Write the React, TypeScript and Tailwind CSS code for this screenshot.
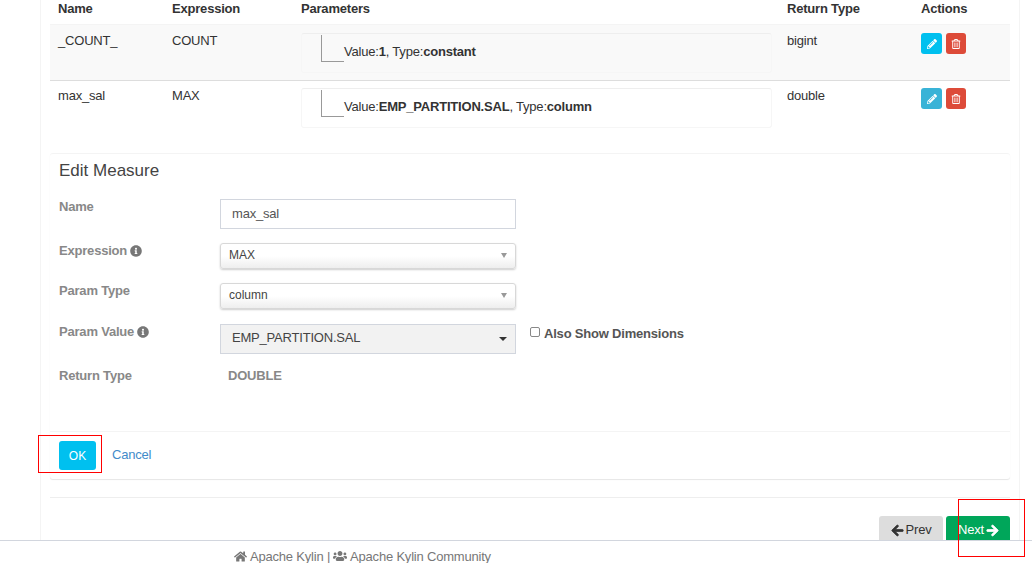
import { FaArrowLeft, FaArrowRight, FaHome, FaInfoCircle, FaPencilAlt, FaRegTrashAlt, FaUsers } from "react-icons/fa"

const measures = [
    { name: "_COUNT_", expression: "COUNT", value: "1", type: "constant", returnType: "bigint", striped: true },
    { name: "max_sal", expression: "MAX", value: "EMP_PARTITION.SAL", type: "column", returnType: "double", striped: false },
]

const gridCols = "grid grid-cols-[114px_129px_486px_134px_97px]"

function MeasureRow({ m }: { m: (typeof measures)[number] }) {
    return (
        <div className={`${gridCols} text-[#333333] ${m.striped ? "h-[56px] border-b border-[#dddddd] bg-[#f9f9f9]" : "h-[73px] -mt-px"}`}>
            <div className="pl-2 pt-[7px] leading-[18px]">{m.name}</div>
            <div className="pl-2 pt-[7px] leading-[18px]">{m.expression}</div>
            <div className="pl-2 pt-2">
                <div className="h-10 w-[471px] rounded-[3px] border border-[#f6f6f6] border-t-[#eeeeee] pl-[19px] pt-px flex">
                    <div className="h-[27px] w-[23px] shrink-0 border-l border-b border-[#999999]" />
                    <div className="pt-2 leading-[18px]">
                        Value:<b>{m.value}</b>, Type:<b>{m.type}</b>
                    </div>
                </div>
            </div>
            <div className="pl-2 pt-[7px] leading-[18px]">{m.returnType}</div>
            <div className="pl-2 pt-2 flex gap-1">
                <button className={`w-[21px] h-[21px] rounded-[3px] flex items-center justify-center text-white ${m.striped ? "bg-[#00c0ef]" : "bg-[#39b3d7]"}`}>
                    <FaPencilAlt size={10} />
                </button>
                <button className="w-5 h-[21px] rounded-[3px] flex items-center justify-center text-white bg-[#dd4b39]">
                    <FaRegTrashAlt size={10} />
                </button>
            </div>
        </div>
    )
}

function FieldLabel({ text, info }: { text: string; info?: boolean }) {
    return (
        <div className="w-[161px] shrink-0 font-bold text-[#888888] flex items-center gap-[3px] h-5">
            {text}
            {info && <FaInfoCircle size={12} className="text-[#777777]" />}
        </div>
    )
}

function Chosen({ value }: { value: string }) {
    return (
        <div className="relative mt-[2px] w-[296px] h-[26px] rounded-[3px] border border-[#d8d8d8] bg-gradient-to-b from-white from-50% to-[#eeeeee] shadow-[0_1px_2px_rgba(0,0,0,0.2)] pl-2 text-xs tracking-normal leading-[22px] text-[#444444]">
            {value}
            <span className="absolute right-[8px] top-[9px] w-0 h-0 border-x-[3px] border-x-transparent border-t-[5px] border-t-[#999999]" />
        </div>
    )
}

export default function App() {
    return (
        <div className="relative h-[563px] w-[1032px] overflow-hidden bg-white text-[13px] tracking-[-0.2px] font-['Liberation_Sans',Arial,sans-serif]">
            <div className="ml-10 w-[980px] h-[563px] border-x border-[#f4f4f4] px-[9px]">
                {/* Measures table */}
                <div className={`${gridCols} h-[25px] font-bold text-[#333333] border-b border-[#f4f4f4]`}>
                    <div className="pl-2 leading-[17px]">Name</div>
                    <div className="pl-2 leading-[17px]">Expression</div>
                    <div className="pl-2 leading-[17px]">Parameters</div>
                    <div className="pl-2 leading-[17px]">Return Type</div>
                    <div className="pl-2 leading-[17px]">Actions</div>
                </div>
                {measures.map((m) => (
                    <MeasureRow key={m.name} m={m} />
                ))}

                {/* Edit form */}
                <div className="h-[326px] rounded-[3px] border-t border-[#f4f4f4] shadow-[0_1px_1px_rgba(0,0,0,0.1)] flex flex-col">
                    <h3 className="pl-[9px] pt-[7px] text-[17px] tracking-normal leading-5 text-[#444444]">Edit Measure</h3>
                    <div className="pl-[9px] pt-[16px] flex-1 text-[#555555]">
                        <div className="flex h-[44px]">
                            <FieldLabel text="Name" />
                            <div className="mt-[2px] w-[296px] h-[30px] border border-[#d2d6de] pl-[11px] leading-[28px] text-[#555555]">max_sal</div>
                        </div>
                        <div className="flex h-[40px]">
                            <FieldLabel text="Expression" info />
                            <Chosen value="MAX" />
                        </div>
                        <div className="flex h-[41px]">
                            <FieldLabel text="Param Type" />
                            <Chosen value="column" />
                        </div>
                        <div className="flex h-[42px]">
                            <FieldLabel text="Param Value" info />
                            <div className="relative mt-[2px] w-[296px] h-[30px] border border-[#d2d6de] bg-[#f2f2f2] pl-[11px] leading-[26px] text-[#444444]">
                                EMP_PARTITION.SAL
                                <span className="absolute right-[8px] top-[12px] w-0 h-0 border-x-[4px] border-x-transparent border-t-[4px] border-t-[#333333]" />
                            </div>
                            <label className="ml-[14px] flex items-start gap-[4px] font-bold text-[#555555]">
                                <span className="mt-[5px] w-[10px] h-[10px] rounded-[2px] border border-[#888888] bg-white" />
                                <span className="mt-[3px] leading-[18px]">Also Show Dimensions</span>
                            </label>
                        </div>
                        <div className="flex pt-[2px]">
                            <FieldLabel text="Return Type" />
                            <div className="pl-2 font-bold text-[#888888] leading-5">DOUBLE</div>
                        </div>
                    </div>
                    <div className="h-[48px] border-t border-[#f4f4f4] pl-[9px] pt-[9px] flex items-start">
                        <button className="w-[37px] h-[29px] rounded-[3px] bg-[#00c0ef] text-white text-xs tracking-normal">OK</button>
                        <a className="ml-4 text-[#428bca] leading-[27px]">Cancel</a>
                    </div>
                </div>

                <div className="mt-[18px] border-t border-[#eeeeee] pt-[18px] flex justify-end gap-[3px]">
                    <button className="w-[64px] h-[30px] rounded-t-[3px] bg-[#dddddd] text-[#333333] flex items-start justify-center gap-[2px] pt-[5px] leading-[18px]">
                        <FaArrowLeft size={13} stroke="currentColor" strokeWidth={30} className="mt-[3px]" /> Prev
                    </button>
                    <button className="w-[64px] h-[30px] rounded-t-[3px] bg-[#00a65a] text-white flex items-start justify-center gap-[2px] pl-px pt-[5px] leading-[18px]">
                        Next <FaArrowRight size={13} stroke="currentColor" strokeWidth={30} className="mt-[3px]" />
                    </button>
                </div>
            </div>

            {/* Footer sits on top of the page content */}
            <div className="absolute left-0 right-0 top-[540px] h-[23px] border-t border-[#d2d6de] bg-white pl-[234px] pt-[8px] flex items-center gap-[3px] tracking-[-0.2px] leading-none text-[#777777] whitespace-nowrap">
                <FaHome size={13} /> Apache Kylin | <FaUsers size={14} /> Apache Kylin Community
            </div>

            {/* Red annotation boxes */}
            <div className="absolute left-[38px] top-[435px] w-[64px] h-[38px] border border-[#ff0000]" />
            <div className="absolute left-[958px] top-[499px] w-[67px] h-[58px] border border-[#ff0000]" />
        </div>
    )
}
